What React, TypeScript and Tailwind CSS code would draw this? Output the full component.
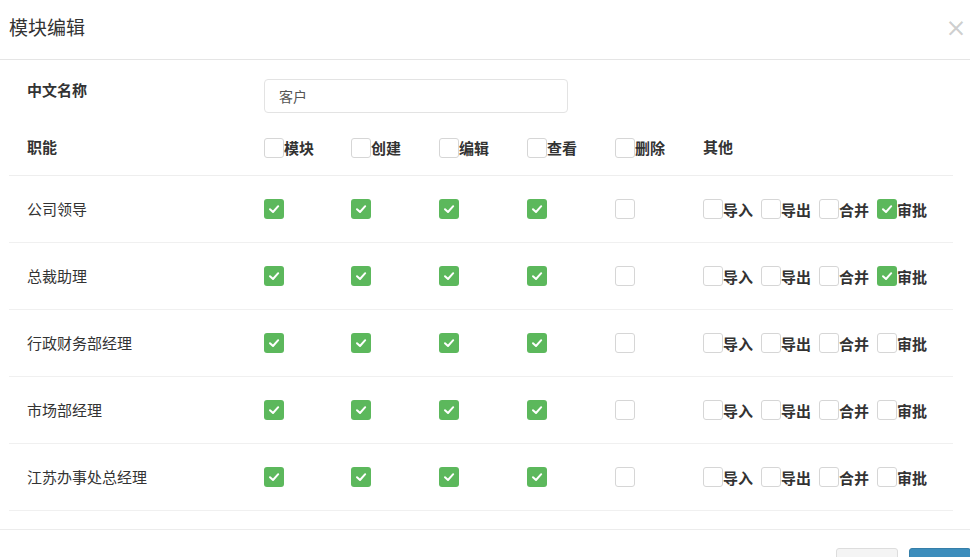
import React from "react";

type Role = {
  name: string;
  perms: boolean[];
  extra: boolean[];
};

const roles: Role[] = [
  { name: "公司领导", perms: [true, true, true, true, false], extra: [false, false, false, true] },
  { name: "总裁助理", perms: [true, true, true, true, false], extra: [false, false, false, true] },
  { name: "行政财务部经理", perms: [true, true, true, true, false], extra: [false, false, false, false] },
  { name: "市场部经理", perms: [true, true, true, true, false], extra: [false, false, false, false] },
  { name: "江苏办事处总经理", perms: [true, true, true, true, false], extra: [false, false, false, false] },
];

const columns = ["模块", "创建", "编辑", "查看", "删除"];
const extras = ["导入", "导出", "合并", "审批"];

const gridCols = "grid grid-cols-[255px_87px_88px_88px_88px_88px_1fr]";

function Box({ checked }: { checked?: boolean }) {
  if (checked) {
    return (
      <span className="inline-flex w-[20px] h-[20px] shrink-0 items-center justify-center rounded-[3px] bg-[#5cb85c]">
        <svg width="14" height="14" viewBox="0 0 14 14" fill="none">
          <path
            d="M3 7.2 L6 10 L11.2 4.2"
            stroke="#fff"
            strokeWidth="2"
            strokeLinecap="round"
            strokeLinejoin="round"
          />
        </svg>
      </span>
    );
  }
  return (
    <span className="inline-block w-[20px] h-[20px] shrink-0 rounded-[3px] border border-[#d6d6d6] bg-white" />
  );
}

export default function App() {
  return (
    <div
      className="w-[970px] h-[557px] overflow-hidden bg-white text-[#333]"
      style={{ fontFamily: '"Noto Sans CJK SC", "Noto Sans", sans-serif' }}
    >
      <div className="w-[985px]">
        {/* 标题栏 */}
        <div className="h-[60px] flex items-center justify-between pl-[9px] pr-[18px] border-b border-[#e5e5e5]">
          <h4 className="text-[19px] leading-none pb-[6px] text-[#333]">模块编辑</h4>
          <span className="text-[22px] font-bold leading-none text-black/20 pb-[8px]">×</span>
        </div>

        {/* 表单 */}
        <div className="pl-[9px] w-[953px]">
          <div className={`${gridCols} mt-[19px]`}>
            <label className="pl-[18px] pt-[1px] leading-[20px] text-[15px] font-bold">中文名称</label>
            <div className="col-span-6">
              <div className="w-[304px] h-[34px] flex items-center px-[14px] border border-[#e3e3e3] rounded-[4px] text-[14px] text-[#555]">
                客户
              </div>
            </div>
          </div>

          <div className={`${gridCols} mt-[7px] h-[56px] items-center border-b border-[#eeeeee]`}>
            <span className="pl-[18px] text-[15px] font-bold">职能</span>
            {columns.map((c) => (
              <span key={c} className="flex items-center">
                <Box />
                <span className="text-[15px] font-bold leading-none">{c}</span>
              </span>
            ))}
            <span className="text-[15px] font-bold">其他</span>
          </div>

          {roles.map((r) => (
            <div key={r.name} className={`${gridCols} h-[67px] items-center border-b border-[#f0f0f0]`}>
              <span className="pl-[18px] text-[15px] text-[#333]">{r.name}</span>
              {r.perms.map((p, i) => (
                <span key={i} className="flex items-center">
                  <Box checked={p} />
                </span>
              ))}
              <span className="flex items-center">
                {extras.map((e, i) => (
                  <span key={e} className="flex items-center mr-[8px]">
                    <Box checked={r.extra[i]} />
                    <span className="text-[15px] font-bold leading-none w-[30px]">{e}</span>
                  </span>
                ))}
              </span>
            </div>
          ))}
        </div>

        {/* 底部按钮 */}
        <div className="mt-[18px] border-t border-[#ececec] pt-[18px] flex justify-end gap-[11px] pr-[14px]">
          <button
            aria-label="取消"
            className="w-[62px] h-[34px] rounded-[3px] border border-[#dddddd] bg-[#f4f4f4]"
          />
          <button
            aria-label="保存"
            className="w-[62px] h-[34px] rounded-[3px] border border-[#367fa9] bg-[#3c8dbc]"
          />
        </div>
      </div>
    </div>
  );
}
